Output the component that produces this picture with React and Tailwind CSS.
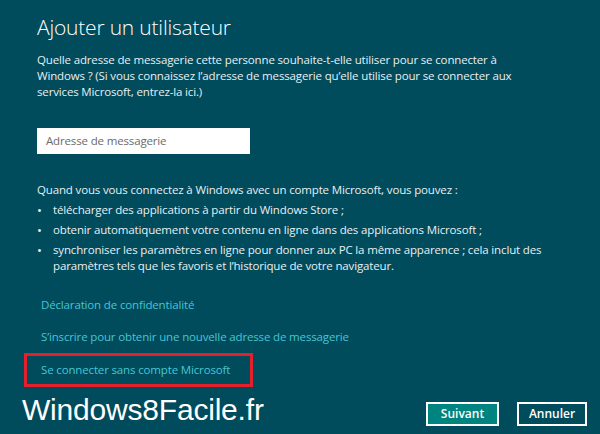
const bullets = [
  ['télécharger des applications à partir du Windows Store ;'],
  ['obtenir automatiquement votre contenu en ligne dans des applications Microsoft ;'],
  [
    'synchroniser les paramètres en ligne pour donner aux PC la même apparence ; cela inclut des',
    'paramètres tels que les favoris et l’historique de votre navigateur.',
  ],
]

export default function App() {
  return (
    <div className="w-[600px] h-[434px] overflow-hidden bg-[#004b5c] text-[#e9eff1] font-['Open_Sans',sans-serif]">
      <div className="pl-[37px] pt-[13px]">
        <h1 className="text-[21px] leading-[28px] font-light text-white tracking-[-0.2px]">Ajouter un utilisateur</h1>

        <p className="mt-[11px] text-[11.5px] tracking-[-0.15px] leading-4">
          Quelle adresse de messagerie cette personne souhaite-t-elle utiliser pour se connecter à
          <br />
          Windows ? (Si vous connaissez l’adresse de messagerie qu’elle utilise pour se connecter aux
          <br />
          services Microsoft, entrez-la ici.)
        </p>

        <div className="mt-[28px] w-[213px] h-[26px] bg-white flex items-center pl-[9px] text-[11.5px] tracking-[-0.15px] text-[#6b6b6b]">
          Adresse de messagerie
        </div>

        <p className="mt-[28px] text-[11.5px] tracking-[-0.15px] leading-4">
          Quand vous vous connectez à Windows avec un compte Microsoft, vous pouvez :
        </p>
        <ul className="mt-1 flex flex-col gap-1 text-[11.5px] tracking-[-0.15px] leading-4">
          {bullets.map((lines, i) => (
            <li key={i} className="flex">
              <span className="w-[16px] shrink-0 text-[13px]">•</span>
              <span>
                {lines.map((l, j) => (
                  <span key={j} className="block">{l}</span>
                ))}
              </span>
            </li>
          ))}
        </ul>

        <div className="mt-[23px] pl-[4px] flex flex-col text-[11.5px] tracking-[-0.15px] leading-4 text-[#46c6d6]">
          <a>Déclaration de confidentialité</a>
          <a className="mt-4">S’inscrire pour obtenir une nouvelle adresse de messagerie</a>
          <div className="mt-[8px] -ml-[17px] w-[229px] border-[3px] border-[#e3202b] pl-[14px] py-[6px]">
            <a>Se connecter sans compte Microsoft</a>
          </div>
        </div>
      </div>

      <div className="mt-[8px] pl-[22px] pr-[13px] flex items-start justify-between">
        <span className="font-['Liberation_Sans',Arial,sans-serif] text-[30px] leading-[30px] text-white tracking-[-0.2px]">
          Windows8Facile.fr
        </span>
        <div className="mt-[7px] flex gap-[18px] text-[12px] font-semibold text-white">
          <button className="w-[73px] h-[24px] border-2 border-white bg-[#00847f] leading-none">Suivant</button>
          <button className="w-[70px] h-[24px] border-2 border-white leading-none">Annuler</button>
        </div>
      </div>
    </div>
  )
}
